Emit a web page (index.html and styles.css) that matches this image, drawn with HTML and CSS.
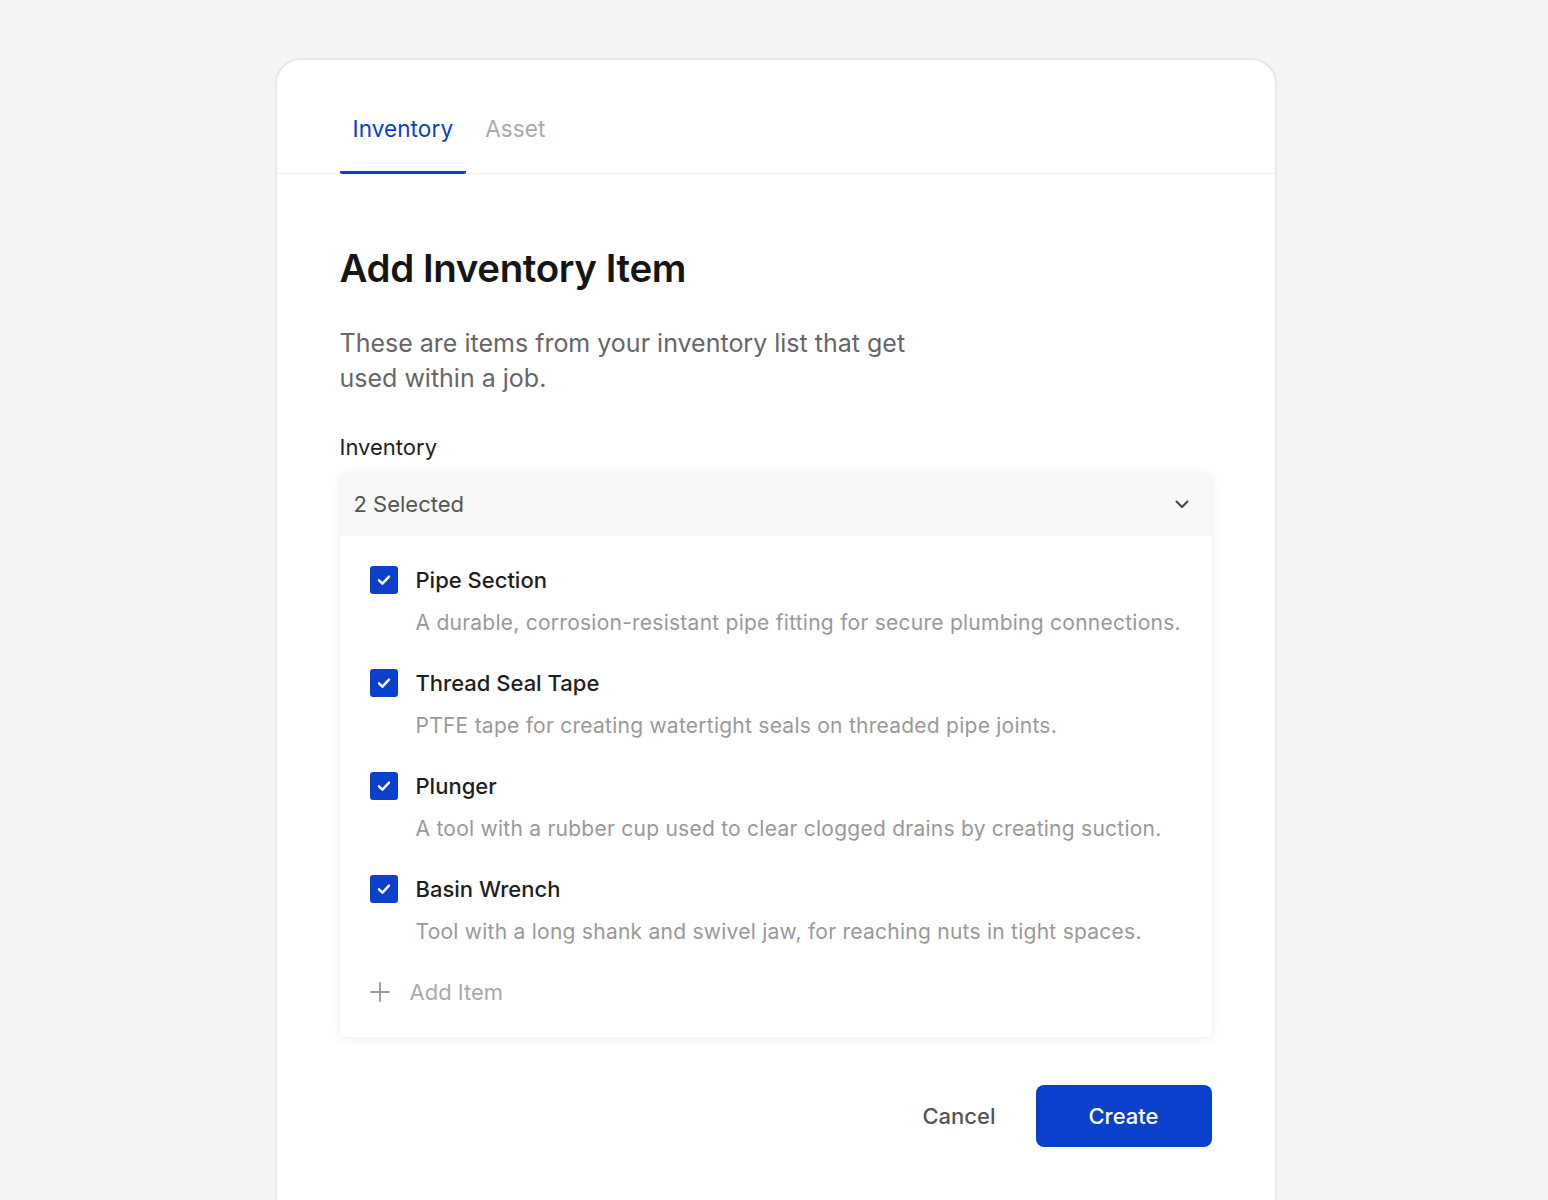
FILE: index.html
```html
<!DOCTYPE html>
<html lang="en">

<head>
    <meta charset="UTF-8">
    <meta name="viewport" content="width=device-width, initial-scale=1.0">
    <title>Add Inventory Item</title>
    <link rel="stylesheet" href="styles.css">
</head>

<body>
    <div class="card">
        <div class="tabs">
            <div class="tab active">Inventory</div>
            <div class="tab">Asset</div>
        </div>

        <div class="content">
            <h1>Add Inventory Item</h1>
            <p class="desc">These are items from your inventory list that get used within a job.</p>

            <label class="field-label">Inventory</label>
            <div class="dropdown">
                <div class="dropdown-head">
                    <span>2 Selected</span>
                    <svg width="18" height="18" viewBox="0 0 18 18" fill="none">
                        <path d="M3.5 6.5 9 12l5.5-5.5" stroke="#444" stroke-width="2" stroke-linecap="round" stroke-linejoin="round"/>
                    </svg>
                </div>
                <div class="dropdown-list">
                    <div class="item">
                        <div class="item-row">
                            <span class="check"><svg width="20" height="20" viewBox="0 0 18 18" fill="none"><path d="M4.5 9.3 7.6 12.3 13.5 6" stroke="#fff" stroke-width="2.2" stroke-linecap="round" stroke-linejoin="round"/></svg></span>
                            <span class="item-title">Pipe Section</span>
                        </div>
                        <div class="item-desc">A durable, corrosion-resistant pipe fitting for secure plumbing connections.</div>
                    </div>
                    <div class="item">
                        <div class="item-row">
                            <span class="check"><svg width="20" height="20" viewBox="0 0 18 18" fill="none"><path d="M4.5 9.3 7.6 12.3 13.5 6" stroke="#fff" stroke-width="2.2" stroke-linecap="round" stroke-linejoin="round"/></svg></span>
                            <span class="item-title">Thread Seal Tape</span>
                        </div>
                        <div class="item-desc">PTFE tape for creating watertight seals on threaded pipe joints.</div>
                    </div>
                    <div class="item">
                        <div class="item-row">
                            <span class="check"><svg width="20" height="20" viewBox="0 0 18 18" fill="none"><path d="M4.5 9.3 7.6 12.3 13.5 6" stroke="#fff" stroke-width="2.2" stroke-linecap="round" stroke-linejoin="round"/></svg></span>
                            <span class="item-title">Plunger</span>
                        </div>
                        <div class="item-desc">A tool with a rubber cup used to clear clogged drains by creating suction.</div>
                    </div>
                    <div class="item">
                        <div class="item-row">
                            <span class="check"><svg width="20" height="20" viewBox="0 0 18 18" fill="none"><path d="M4.5 9.3 7.6 12.3 13.5 6" stroke="#fff" stroke-width="2.2" stroke-linecap="round" stroke-linejoin="round"/></svg></span>
                            <span class="item-title">Basin Wrench</span>
                        </div>
                        <div class="item-desc">Tool with a long shank and swivel jaw, for reaching nuts in tight spaces.</div>
                    </div>
                    <div class="add-item">
                        <svg width="20" height="20" viewBox="0 0 20 20" fill="none">
                            <path d="M10 1v18M1 10h18" stroke="#999" stroke-width="1.8" stroke-linecap="round"/>
                        </svg>
                        <span>Add Item</span>
                    </div>
                </div>
            </div>

            <div class="actions">
                <button class="btn-cancel">Cancel</button>
                <button class="btn-create">Create</button>
            </div>
        </div>
    </div>
</body>

</html>
```

FILE: styles.css
```css
body {
    font-family: 'Inter', 'Noto Sans', sans-serif;
    background-color: #f4f4f4;
    color: #222;
    margin: 0;
    padding-left: 3px;
}

.card {
    width: 998px;
    margin: 58px auto 0;
    background: #fff;
    border: 2px solid #e8e8e8;
    border-radius: 26px;
    padding-bottom: 90px;
}

.tabs {
    display: flex;
    gap: 6px;
    padding: 40px 63px 0;
    border-bottom: 1px solid #eee;
}

.tab {
    font-size: 22.5px;
    line-height: 30px;
    padding: 14px 13px 27px;
    color: #aaa;
    border-bottom: 3px solid transparent;
    margin-bottom: -1px;
    letter-spacing: 0.1px;
}

.tab.active {
    color: #0a40cc;
    border-bottom-color: #0a40cc;
    border-radius: 2px;
}

.content {
    padding: 71px 63px 0;
}

h1 {
    font-size: 38.5px;
    line-height: 46px;
    font-weight: 600;
    letter-spacing: -0.4px;
    color: #151515;
    margin: 0;
}

.desc {
    font-size: 25px;
    line-height: 35px;
    color: #666;
    max-width: 600px;
    margin: 35px 0 0;
    letter-spacing: 0;
}

.field-label {
    display: block;
    font-size: 22px;
    line-height: 28px;
    margin-top: 37px;
    color: #1e1e1e;
}

.dropdown {
    margin-top: 11px;
    border-radius: 6px;
    box-shadow: 0 2px 8px rgba(0, 0, 0, 0.08);
    overflow: hidden;
}

.dropdown-head {
    height: 64px;
    background: #f8f8f8;
    display: flex;
    align-items: center;
    justify-content: space-between;
    padding: 0 21px 0 14px;
    font-size: 22px;
    color: #555;
}

.dropdown-list {
    background: #fff;
    padding: 29px 30px 30px;
    display: flex;
    flex-direction: column;
    gap: 30px;
}

.item-row {
    display: flex;
    align-items: center;
    gap: 18px;
}

.check {
    width: 28px;
    height: 28px;
    border-radius: 3px;
    background: #0a40cc;
    display: flex;
    align-items: center;
    justify-content: center;
}

.item-title {
    font-size: 22px;
    line-height: 30px;
    font-weight: 500;
    color: #1e1e1e;
}

.item-desc {
    margin: 13px 0 0 46px;
    font-size: 21px;
    line-height: 30px;
    color: #999;
    letter-spacing: 0.25px;
}

.add-item {
    display: flex;
    align-items: center;
    gap: 20px;
    font-size: 22px;
    line-height: 30px;
    color: #aaa;
}

.actions {
    display: flex;
    justify-content: flex-end;
    align-items: center;
    gap: 40px;
    margin-top: 48px;
}

button {
    font-family: inherit;
    font-size: 22px;
    font-weight: 500;
    border: none;
    cursor: pointer;
}

.btn-cancel {
    background: none;
    padding: 0;
    color: #555;
}

.btn-create {
    width: 176px;
    height: 62px;
    border-radius: 8px;
    background: #0a40cc;
    color: #fff;
}
```
